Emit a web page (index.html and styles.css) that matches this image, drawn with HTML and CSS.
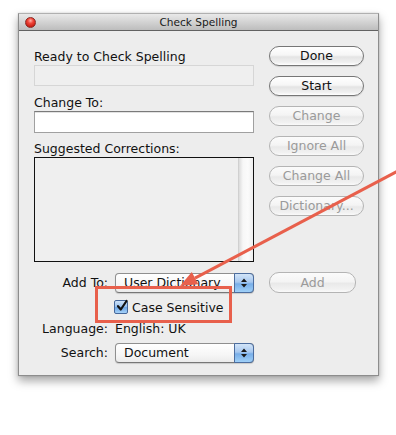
FILE: index.html
```html
<!DOCTYPE html>
<html>
<head>
<meta charset="utf-8">
<link rel="stylesheet" href="styles.css">
</head>
<body>
<div class="window">
  <div class="titlebar">
    <span class="close"></span>
    <span class="title">Check Spelling</span>
  </div>
  <div class="content">
    <div class="top">
      <div class="left">
        <div class="label">Ready to Check Spelling</div>
        <div class="field disabled"></div>
        <div class="label gap9">Change To:</div>
        <div class="field edit"></div>
        <div class="label gap8">Suggested Corrections:</div>
        <div class="list"><div class="scroll"></div></div>
      </div>
      <div class="buttons">
        <div class="btn">Done</div>
        <div class="btn">Start</div>
        <div class="btn dis">Change</div>
        <div class="btn dis">Ignore All</div>
        <div class="btn dis">Change All</div>
        <div class="btn dis">Dictionary...</div>
      </div>
    </div>
    <div class="bottom">
      <div class="lbl">Add To:</div>
      <div class="popup"><span class="ptext">User Dictionary</span><span class="arrows"><svg width="8" height="12" viewBox="0 0 8 12"><path d="M4 1.5 L7 5 L1 5 Z M1 7 L7 7 L4 10.5 Z" fill="#1a1a1a"/></svg></span></div>
      <div class="btn dis add">Add</div>

      <div></div>
      <div class="check"><span class="box"><svg width="14" height="14" viewBox="0 0 14 14"><path d="M3 7.2 L5.8 10.5 L11.5 2" fill="none" stroke="#111" stroke-width="2.2" stroke-linecap="round" stroke-linejoin="round"/></svg></span><span>Case Sensitive</span></div>
      <div></div>

      <div class="lbl">Language:</div>
      <div class="val">English: UK</div>
      <div></div>

      <div class="lbl r4">Search:</div>
      <div class="popup r4"><span class="ptext">Document</span><span class="arrows"><svg width="8" height="12" viewBox="0 0 8 12"><path d="M4 1.5 L7 5 L1 5 Z M1 7 L7 7 L4 10.5 Z" fill="#1a1a1a"/></svg></span></div>
      <div></div>
    </div>
  </div>
</div>
<div class="callout"></div>
<svg class="arrow" width="396" height="435" viewBox="0 0 396 435">
  <line x1="397" y1="171.5" x2="195" y2="278.1" stroke="#e8604c" stroke-width="3"/>
  <polygon points="180,286 198.3,284.3 191.8,271.9" fill="#e8604c"/>
</svg>
</body>
</html>
```

FILE: styles.css
```css
* { box-sizing: border-box; }
html, body { margin: 0; padding: 0; background: #ffffff; }
body {
  width: 396px;
  height: 435px;
  position: relative;
  overflow: hidden;
  font-family: "DejaVu Sans", sans-serif;
  font-size: 12.5px;
  color: #111;
}
.window {
  margin: 13px 0 0 18px;
  width: 361px;
  height: 363px;
  border: 1px solid #8d8d8d;
  border-top-color: #b0b0b0;
  background: #ededed;
  box-shadow: 0 5px 9px rgba(0,0,0,0.35), 0 0 2px rgba(0,0,0,0.15);
}
.titlebar {
  height: 17px;
  border-bottom: 1px solid #626262;
  background: linear-gradient(#e9e9e9, #d3d3d3 50%, #bdbdbd);
  display: flex;
  align-items: center;
  justify-content: center;
  position: relative;
}
.close {
  position: absolute;
  left: 6px;
  top: 3px;
  width: 11px;
  height: 11px;
  border-radius: 50%;
  background: radial-gradient(circle at 50% 30%, #ffb0a8 0, #f0463a 35%, #c41a10 80%, #a01008 100%);
  border: 1px solid #8a2a24;
}
.title {
  font-size: 10.6px;
  color: #1a1a1a;
  line-height: 16px;
}
.content {
  padding: 0 0 0 15px;
}
.top {
  display: flex;
  gap: 15px;
  padding-top: 15px;
}
.left {
  width: 220px;
  margin-top: 3px;
  display: flex;
  flex-direction: column;
}
.label {
  line-height: 15px;
  height: 15px;
  white-space: nowrap;
}
.gap9 { margin-top: 9px; }
.gap8 { margin-top: 8px; }
.field {
  margin-top: 1px;
  height: 21px;
}
.field.disabled {
  background: #efefef;
  border: 1px solid #d6d6d6;
}
.field.edit {
  height: 22px;
  background: #fff;
  border: 1px solid #a0a0a0;
  border-top-color: #7a7a7a;
  box-shadow: inset 0 1px 0 #e2e2e2;
}
.list {
  margin-top: 1px;
  height: 105px;
  border: 1.5px solid #111;
  background: #efefef;
  display: flex;
  justify-content: flex-end;
}
.scroll {
  width: 15px;
  height: 100%;
  background: linear-gradient(to right, #c4c4c4 0, #dcdcdc 1px, #f7f7f7 5px, #fbfbfb 10px, #eeeeee 100%);
}
.buttons {
  width: 95px;
  display: flex;
  flex-direction: column;
  gap: 10px;
}
.btn {
  height: 20px;
  border-radius: 10px;
  border: 1px solid #767676;
  background: linear-gradient(#ffffff 0, #f6f6f6 45%, #e4e4e4 55%, #f0f0f0 85%, #ffffff 100%);
  box-shadow: 0 1px 1px rgba(0,0,0,0.12);
  text-align: center;
  line-height: 18px;
  color: #111;
  white-space: nowrap;
}
.btn.dis {
  border-color: #b4b4b4;
  color: #9a9a9a;
  background: linear-gradient(#fbfbfb 0, #f4f4f4 45%, #e9e9e9 55%, #f1f1f1 85%, #fafafa 100%);
  box-shadow: none;
}
.bottom {
  margin-top: 10px;
  display: grid;
  grid-template-columns: 74px 139px 95px;
  grid-template-rows: 21px 28px 14px 28px;
  column-gap: 7px;
  align-items: center;
}
.add { margin-left: 8px; height: 21px; line-height: 19px; }
.lbl {
  text-align: right;
  white-space: nowrap;
  line-height: 15px;
}
.val {
  white-space: nowrap;
  line-height: 15px;
}
.r4 { align-self: end; }
.lbl.r4 { line-height: 20px; }
.popup {
  height: 20px;
  border: 1px solid #8f8f8f;
  border-bottom-color: #777;
  border-radius: 4px;
  background: linear-gradient(#ffffff, #f6f6f6 60%, #ebebeb);
  display: flex;
  align-items: center;
  justify-content: space-between;
  position: relative;
  box-shadow: 0 1px 1px rgba(0,0,0,0.15);
}
.ptext {
  padding-left: 8px;
  line-height: 18px;
  white-space: nowrap;
}
.arrows {
  width: 20px;
  height: 20px;
  margin: -1px -1px -1px 0;
  border: 1px solid #4c6d9e;
  border-radius: 0 4px 4px 0;
  background: linear-gradient(#d2e4f8 0, #a7c8ef 45%, #78aee8 55%, #9fd0f8 100%);
  display: flex;
  align-items: center;
  justify-content: center;
}
.arrows svg { display: block; }
.check {
  display: flex;
  align-items: center;
  gap: 4px;
  margin-left: -1px;
  white-space: nowrap;
  line-height: 15px;
}
.box {
  width: 14px;
  height: 14px;
  border: 1px solid #45679a;
  border-radius: 2px;
  background: linear-gradient(#cfe2f8 0, #9cc3ef 45%, #6ea6e6 55%, #a6d2f8 100%);
  position: relative;
  display: block;
}
.box svg { position: absolute; left: 0px; top: -2px; }
.callout {
  position: absolute;
  left: 95px;
  top: 286px;
  width: 137px;
  height: 37px;
  border: 3px solid #e8604c;
}
.arrow {
  position: absolute;
  left: 0;
  top: 0;
  pointer-events: none;
}
```
